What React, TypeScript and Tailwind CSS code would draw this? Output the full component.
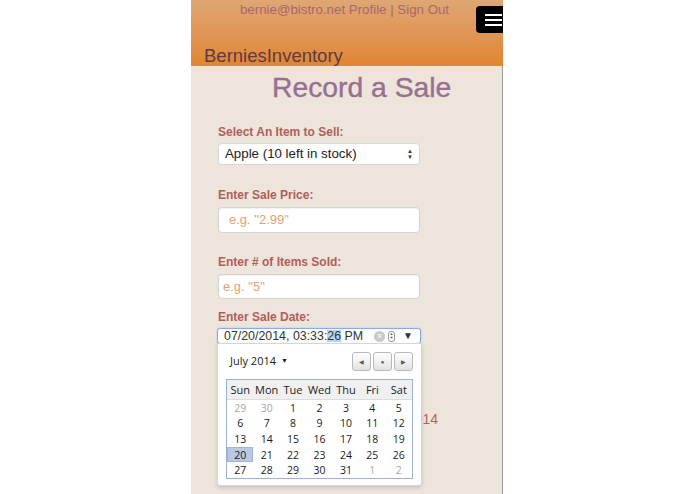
const weeks: { d: number; muted?: boolean; active?: boolean }[][] = [
  [{ d: 29, muted: true }, { d: 30, muted: true }, { d: 1 }, { d: 2 }, { d: 3 }, { d: 4 }, { d: 5 }],
  [{ d: 6 }, { d: 7 }, { d: 8 }, { d: 9 }, { d: 10 }, { d: 11 }, { d: 12 }],
  [{ d: 13 }, { d: 14 }, { d: 15 }, { d: 16 }, { d: 17 }, { d: 18 }, { d: 19 }],
  [{ d: 20, active: true }, { d: 21 }, { d: 22 }, { d: 23 }, { d: 24 }, { d: 25 }, { d: 26 }],
  [{ d: 27 }, { d: 28 }, { d: 29 }, { d: 30 }, { d: 31 }, { d: 1, muted: true }, { d: 2, muted: true }],
];

const days = ['Sun', 'Mon', 'Tue', 'Wed', 'Thu', 'Fri', 'Sat'];

function Label({ children, className = '' }: { children: React.ReactNode; className?: string }) {
  return (
    <div className={`text-[12px] leading-[16px] font-bold text-[#b05e5b] ${className}`}>{children}</div>
  );
}

function NavButton({ children }: { children: React.ReactNode }) {
  return (
    <div className="w-[19px] h-[19px] rounded-[3px] border border-[#b9b9b9] bg-gradient-to-b from-white to-[#e2e2e2] flex items-center justify-center text-[#555] text-[6px] leading-none">
      {children}
    </div>
  );
}

function DatePicker() {
  return (
    <div className="absolute left-[-1px] top-[15px] w-[205px] h-[143px] bg-white border border-[#d6d6d6] rounded-b-[3px] shadow-[0_2px_4px_rgba(0,0,0,0.15)] z-10 font-['Open_Sans',sans-serif]">
      <div className="flex items-center justify-between pt-[8px] pl-[12px] pr-[8px]">
        <div className="flex items-center gap-[5px] text-[11px] text-[#222]">
          July 2014
          <span className="text-[7px]">▼</span>
        </div>
        <div className="flex gap-[2px]">
          <NavButton>◀</NavButton>
          <NavButton>●</NavButton>
          <NavButton>▶</NavButton>
        </div>
      </div>
      <div className="mt-[8px] mx-[8px] border border-[#9db1d6]">
        <div className="grid grid-cols-7 h-[20px] bg-[#f0f0f0] border-b border-[#dcdcdc] text-[11px] leading-[20px] text-[#222]">
          {days.map((d) => (
            <div key={d} className="text-center">{d}</div>
          ))}
        </div>
        {weeks.map((w, i) => (
          <div key={i} className="grid grid-cols-7 h-[15.6px] text-[10.5px] leading-[12px]">
            {w.map((c, j) => (
              <div
                key={j}
                className={`h-full flex items-center justify-center ${c.muted ? 'text-[#a8a8a8]' : 'text-[#1a1a1a]'} ${c.active ? 'bg-[#b9c9e3] border border-[#9fb3d6]' : ''}`}
              >
                {c.d}
              </div>
            ))}
          </div>
        ))}
      </div>
    </div>
  );
}

export default function App() {
  return (
    <div className="min-h-screen bg-white font-['Liberation_Sans',Arial,sans-serif]">
      <div className="w-[312px] ml-[191px] min-h-[494px] flex flex-col overflow-hidden">
        <header className="relative h-[66px] bg-gradient-to-b from-[#dea774] to-[#e1852f]">
          <div className="text-[13.3px] leading-[20px] text-center pr-[5px] text-[#a8676f]">
            bernie@bistro.net Profile | Sign Out
          </div>
          <div className="mt-[26px] pl-[13px] text-[18.5px] leading-[20px] text-[#5d3a46]">BerniesInventory</div>
          <div className="absolute left-[285px] top-[6px] w-[30px] h-[27px] rounded-[4px] bg-black flex flex-col gap-[3px] pt-[8px] pl-[9px]">
            <div className="w-[17px] h-[2px] bg-white"></div>
            <div className="w-[17px] h-[2px] bg-white"></div>
            <div className="w-[17px] h-[2px] bg-white"></div>
          </div>
        </header>

        <main className="flex-1 bg-[#ede5db] border-r border-[#9a9a9a] pb-[20px]">
          <h1 className="mt-[5px] pl-[81px] text-[28.3px] leading-[32px] text-[#98708f] [-webkit-text-stroke:0.4px_#98708f]">
            Record a Sale
          </h1>

          <div className="pl-[27px]">
            <Label className="mt-[21px]">Select An Item to Sell:</Label>
            <div className="mt-[3px] w-[202px] h-[22px] bg-white rounded-[4px] border border-[#d8d8d8] flex items-center justify-between pl-[6px] pr-[6px] text-[13.3px] text-[#222]">
              <span>Apple (10 left in stock)</span>
              <span className="flex flex-col text-[6px] leading-[6px] text-[#333]">
                <span>▲</span>
                <span>▼</span>
              </span>
            </div>

            <Label className="mt-[22px]">Enter Sale Price:</Label>
            <div className="mt-[4px] w-[202px] h-[26px] bg-white rounded-[4px] border border-[#d2d2d2] shadow-[inset_0_1px_1px_rgba(0,0,0,0.06)] flex items-center pl-[10px] text-[13px] text-[#e3a270]">
              e.g. "2.99"
            </div>

            <Label className="mt-[21px]">Enter # of Items Sold:</Label>
            <div className="mt-[4px] w-[202px] h-[25px] bg-white rounded-[4px] border border-[#d2d2d2] shadow-[inset_0_1px_1px_rgba(0,0,0,0.06)] flex items-center pl-[4px] text-[13px] text-[#e3a270]">
              e.g. "5"
            </div>

            <Label className="mt-[10px]">Enter Sale Date:</Label>
            <div className="relative mt-[3px]">
              <div className="ml-[-1px] w-[204px] h-[16px] bg-white rounded-[3px] border border-[#86aee6] shadow-[0_0_2px_#9cc0ef] flex items-center pl-[6px] pr-[7px] text-[12.4px] leading-none text-[#333]">
                <span>07/20/2014, 03:33:</span>
                <span className="bg-[#b5d3f6]">26</span>
                <span>&nbsp;PM</span>
                <span className="ml-auto flex items-center gap-[3px]">
                  <span className="w-[11px] h-[11px] rounded-full bg-[#c9c9c9] text-white text-[9px] leading-[11px] text-center">×</span>
                  <span className="w-[7px] h-[11px] rounded-[3px] border border-[#999] flex flex-col items-center justify-center text-[4px] leading-[4px] text-[#555]">
                    <span>▲</span>
                    <span>▼</span>
                  </span>
                  <span className="text-[10px] ml-[5px] text-[#333]">▼</span>
                </span>
              </div>
              <DatePicker />
            </div>

            <div className="mt-[65px] w-[220px] text-right text-[14px] leading-[20px] text-[#b0655f]">
              Sale date: 07/20/2014
            </div>
          </div>
        </main>
      </div>
    </div>
  );
}
